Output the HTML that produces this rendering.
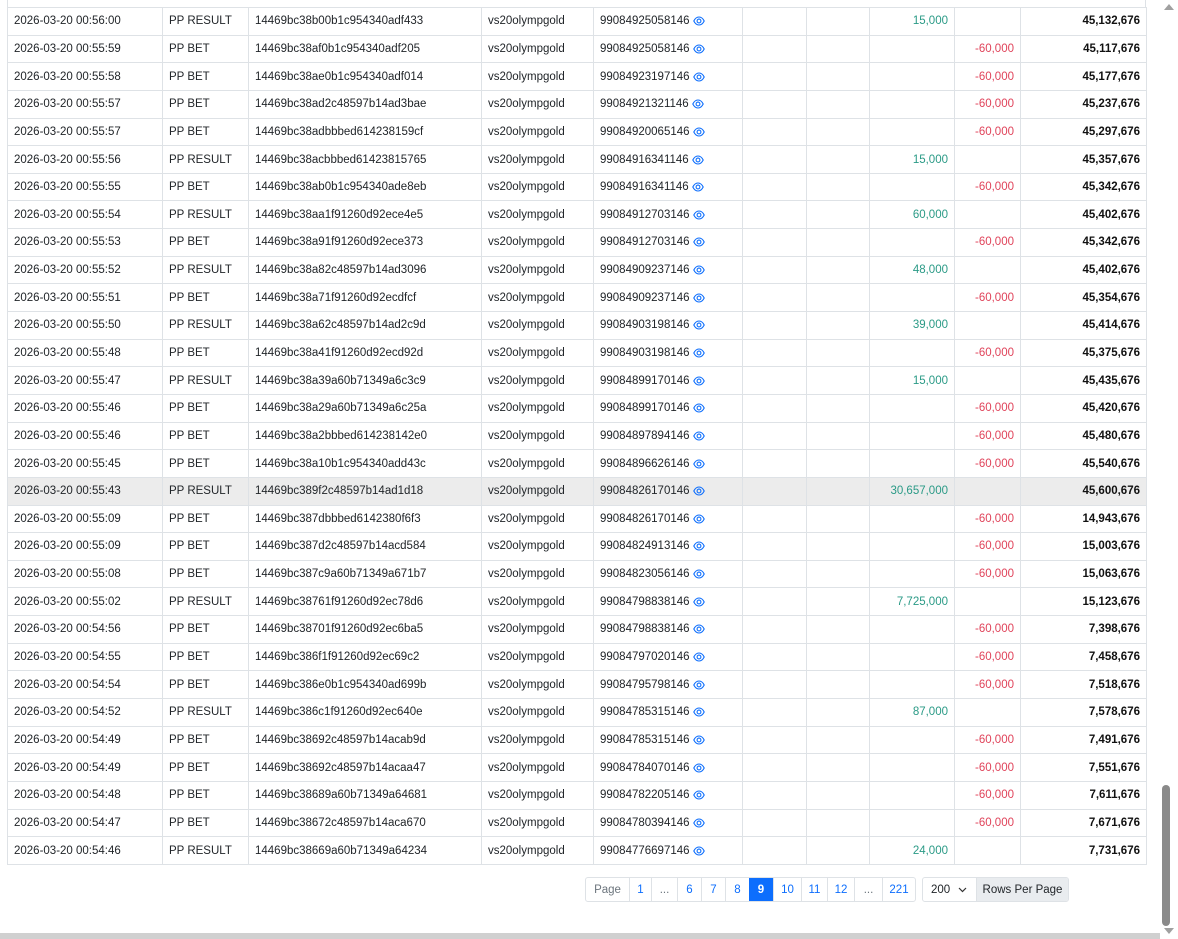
<!DOCTYPE html>
<html><head><meta charset="utf-8"><style>
html,body{margin:0;padding:0;width:1178px;height:939px;overflow:hidden;background:#fff;font-family:"Liberation Sans",sans-serif;font-size:11.5px;color:#212529}
table{position:absolute;left:7px;top:7px;border-collapse:collapse;table-layout:fixed;width:1140px}
td{border:1px solid #dee2e6;height:26.65px;padding:0 6px;white-space:nowrap;overflow:hidden}
td.r{text-align:right}
.g{color:#2a9a86}.n{color:#e0435a}.b{font-weight:bold;color:#111}
tr.h td{background:#ececec}
.eye{display:inline-block;vertical-align:-2px;margin-left:3px}
#top{position:absolute;left:7px;top:0;width:1139px;height:7px;border-left:1px solid #dee2e6;border-right:1px solid #dee2e6;box-sizing:border-box}
.pg{position:absolute;top:877px;height:25px;display:flex;border:1px solid #dee2e6;border-radius:3px;box-sizing:border-box;overflow:hidden}
.pg span{flex:none;box-sizing:border-box;display:flex;align-items:center;justify-content:center;border-left:1px solid #dee2e6;color:#0d6efd;font-size:11.5px}
.pg span:first-child{border-left:none}
#sb{position:absolute;left:1160px;top:0;width:18px;height:933px;background:#fff}
#thumb{position:absolute;left:1162px;top:785px;width:8px;height:141px;background:#8a8a8a;border-radius:4px}
#hb{position:absolute;left:0;top:933px;width:1160px;height:6px;background:#d0d0d0}
</style></head><body>
<div id="top"></div>
<table>
<colgroup><col style="width:155px"><col style="width:86px"><col style="width:233px"><col style="width:112px"><col style="width:149px"><col style="width:64px"><col style="width:63px"><col style="width:85px"><col style="width:66px"><col style="width:126px"></colgroup>
<tbody id="tb"></tbody>
</table>
<div class="pg" style="left:585px;width:331px">
<span style="width:43px;color:#6c757d">Page</span><span style="width:22px">1</span><span style="width:26px;color:#6c757d">...</span><span style="width:24px">6</span><span style="width:24px">7</span><span style="width:24px">8</span><span style="width:24px;background:#0d6efd;color:#fff;font-weight:bold;border-left:none">9</span><span style="width:28px">10</span><span style="width:26px">11</span><span style="width:27px">12</span><span style="width:28px;color:#6c757d">...</span><span style="width:33px">221</span>
</div>
<div class="pg" style="left:922px;width:147px">
<span style="width:53px;color:#212529;justify-content:flex-start;padding-left:8px">200 <svg width="9" height="6" style="margin-left:8px" viewBox="0 0 9 6"><path d="M1 1l3.5 3.5L8 1" stroke="#333" fill="none" stroke-width="1.2"/></svg></span><span style="flex:1;background:#e9ecef;color:#212529">Rows Per Page</span>
</div>
<div id="sb"><svg style="position:absolute;left:4px;top:4px" width="10" height="6"><path d="M0 6L5 0L10 6Z" fill="#a0a0a0"/></svg><svg style="position:absolute;left:4px;top:928px" width="10" height="6"><path d="M0 0L5 6L10 0Z" fill="#a0a0a0"/></svg></div>
<div id="thumb"></div>
<div id="hb"></div>
<script>
var d=[
["00:56:00","R","14469bc38b00b1c954340adf433","99084925058146","15,000","","45,132,676"],
["00:55:59","B","14469bc38af0b1c954340adf205","99084925058146","","-60,000","45,117,676"],
["00:55:58","B","14469bc38ae0b1c954340adf014","99084923197146","","-60,000","45,177,676"],
["00:55:57","B","14469bc38ad2c48597b14ad3bae","99084921321146","","-60,000","45,237,676"],
["00:55:57","B","14469bc38adbbbed614238159cf","99084920065146","","-60,000","45,297,676"],
["00:55:56","R","14469bc38acbbbed61423815765","99084916341146","15,000","","45,357,676"],
["00:55:55","B","14469bc38ab0b1c954340ade8eb","99084916341146","","-60,000","45,342,676"],
["00:55:54","R","14469bc38aa1f91260d92ece4e5","99084912703146","60,000","","45,402,676"],
["00:55:53","B","14469bc38a91f91260d92ece373","99084912703146","","-60,000","45,342,676"],
["00:55:52","R","14469bc38a82c48597b14ad3096","99084909237146","48,000","","45,402,676"],
["00:55:51","B","14469bc38a71f91260d92ecdfcf","99084909237146","","-60,000","45,354,676"],
["00:55:50","R","14469bc38a62c48597b14ad2c9d","99084903198146","39,000","","45,414,676"],
["00:55:48","B","14469bc38a41f91260d92ecd92d","99084903198146","","-60,000","45,375,676"],
["00:55:47","R","14469bc38a39a60b71349a6c3c9","99084899170146","15,000","","45,435,676"],
["00:55:46","B","14469bc38a29a60b71349a6c25a","99084899170146","","-60,000","45,420,676"],
["00:55:46","B","14469bc38a2bbbed614238142e0","99084897894146","","-60,000","45,480,676"],
["00:55:45","B","14469bc38a10b1c954340add43c","99084896626146","","-60,000","45,540,676"],
["00:55:43","R","14469bc389f2c48597b14ad1d18","99084826170146","30,657,000","","45,600,676"],
["00:55:09","B","14469bc387dbbbed6142380f6f3","99084826170146","","-60,000","14,943,676"],
["00:55:09","B","14469bc387d2c48597b14acd584","99084824913146","","-60,000","15,003,676"],
["00:55:08","B","14469bc387c9a60b71349a671b7","99084823056146","","-60,000","15,063,676"],
["00:55:02","R","14469bc38761f91260d92ec78d6","99084798838146","7,725,000","","15,123,676"],
["00:54:56","B","14469bc38701f91260d92ec6ba5","99084798838146","","-60,000","7,398,676"],
["00:54:55","B","14469bc386f1f91260d92ec69c2","99084797020146","","-60,000","7,458,676"],
["00:54:54","B","14469bc386e0b1c954340ad699b","99084795798146","","-60,000","7,518,676"],
["00:54:52","R","14469bc386c1f91260d92ec640e","99084785315146","87,000","","7,578,676"],
["00:54:49","B","14469bc38692c48597b14acab9d","99084785315146","","-60,000","7,491,676"],
["00:54:49","B","14469bc38692c48597b14acaa47","99084784070146","","-60,000","7,551,676"],
["00:54:48","B","14469bc38689a60b71349a64681","99084782205146","","-60,000","7,611,676"],
["00:54:47","B","14469bc38672c48597b14aca670","99084780394146","","-60,000","7,671,676"],
["00:54:46","R","14469bc38669a60b71349a64234","99084776697146","24,000","","7,731,676"]];
var eye='<svg class="eye" width="12" height="10" viewBox="0 0 12 10"><path d="M0.8 5C2.2 2.2 4 1 6 1s3.8 1.2 5.2 4C9.8 7.8 8 9 6 9S2.2 7.8 0.8 5z" fill="none" stroke="#0d6efd" stroke-width="1.1"/><circle cx="6" cy="5" r="1.9" fill="none" stroke="#0d6efd" stroke-width="1.1"/></svg>';
var h='';
d.forEach(function(r,i){h+='<tr'+(i==17?' class="h"':'')+'><td>2026-03-20 '+r[0]+'</td><td>'+(r[1]=='R'?'PP RESULT':'PP BET')+'</td><td>'+r[2]+'</td><td>vs20olympgold</td><td>'+r[3]+eye+'</td><td></td><td></td><td class="r g">'+r[4]+'</td><td class="r n">'+r[5]+'</td><td class="r b">'+r[6]+'</td></tr>';});
document.getElementById('tb').innerHTML=h;
</script>
</body></html>
